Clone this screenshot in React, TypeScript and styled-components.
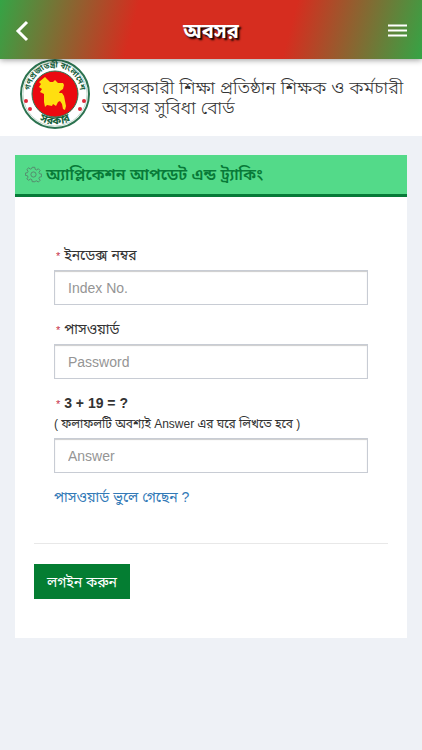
import React from "react";
import styled, { createGlobalStyle } from "styled-components";

const GlobalStyle = createGlobalStyle`
  * { box-sizing: border-box; }
  body {
    margin: 0;
    background: #eef1f6;
    color: #333;
    font-family: "Liberation Sans", "Noto Sans Bengali", "Noto Sans", sans-serif;
    font-size: 14px;
    line-height: 20px;
  }
`;

const TopBar = styled.header`
  position: relative;
  z-index: 1;
  display: flex;
  align-items: center;
  justify-content: space-between;
  height: 59px;
  padding: 3px 12px 0;
  background: linear-gradient(105deg, #35a445 0%, #d62d1f 32%, #d62d1f 68%, #35a445 100%);
  box-shadow: 0 1px 6px rgba(0, 0, 0, 0.4);
`;

const Title = styled.h1`
  margin: 0;
  color: #fff;
  font-size: 20px;
  line-height: 28px;
  font-weight: 700;
  text-shadow: 2px 2px 2px #000;
`;

const BarButton = styled.button`
  display: flex;
  padding: 0;
  border: 0;
  background: none;
  color: #fff;
`;

const Organisation = styled.section`
  display: flex;
  align-items: center;
  gap: 10px;
  min-height: 77px;
  padding: 0 18px 7px;
  background: #fff;
`;

const OrganisationName = styled.h2`
  flex: 1;
  margin: 0;
  padding-top: 8px;
  color: #333;
  font-size: 18px;
  line-height: 20px;
  font-weight: 300;
`;

const Card = styled.main`
  margin: 19px 15px 0;
  background: #fff;
`;

const CardHeader = styled.div`
  display: flex;
  align-items: center;
  gap: 4px;
  min-height: 42px;
  padding: 0 10px;
  border-bottom: 3px solid #067a38;
  background: #53da89;
`;

const CardTitle = styled.h3`
  margin: 0;
  color: #087a38;
  font-size: 16px;
  line-height: 24px;
  font-weight: 600;
`;

const Form = styled.form`
  padding: 48px 19px 39px;
`;

const Fields = styled.div`
  display: flex;
  flex-direction: column;
  gap: 14px;
  padding: 0 20px 36px;
  border-bottom: 1px solid #e8e8e8;
`;

const Field = styled.div`
  display: flex;
  flex-direction: column;
`;

const Label = styled.label<{ $strong?: boolean }>`
  padding: 0 2px ${(p) => (p.$strong ? 0 : 4)}px;
  font-weight: ${(p) => (p.$strong ? 700 : 400)};
`;

const Required = styled.span`
  color: #c8324a;
  font-size: 11px;
  font-weight: 400;
`;

const Hint = styled.span`
  padding-bottom: 4px;
  font-size: 12px;
`;

const TextInput = styled.input`
  width: 100%;
  height: 35px;
  padding: 0 13px;
  border: 1px solid #c8ccd4;
  border-radius: 0;
  background: #fff;
  box-shadow: inset 0 1px 1px rgba(0, 0, 0, 0.2);
  color: #333;
  font: inherit;
  &::placeholder { color: #959595; opacity: 1; }
`;

const ForgotLink = styled.a`
  align-self: flex-start;
  color: #337ab7;
  text-decoration: none;
`;

const SubmitButton = styled.button`
  margin-top: 20px;
  padding: 0 13px;
  height: 35px;
  border: 0;
  background: #047d32;
  color: #fff;
  font: inherit;
`;

const BackIcon = () => (
  <svg width="24" height="24" viewBox="0 0 24 24" fill="none" stroke="currentColor" strokeWidth="3">
    <path d="M15 3 6 12l9 9" />
  </svg>
);

const MenuIcon = () => (
  <svg width="24" height="24" viewBox="0 0 24 24" fill="none" stroke="currentColor" strokeWidth="2">
    <path d="M2 6.500h19M2 11.500h19M2 16.500h19" />
  </svg>
);

const GearIcon = () => (
  <svg width="17" height="17" viewBox="-1 -1 26 26" fill="none" stroke="#568a6d" strokeWidth="1.5" strokeLinejoin="round">
    <path d="M10 1h4l.6 3.2 2.1.9 2.7-1.9 2.8 2.8-1.9 2.7.9 2.1 3.2.6v4l-3.2.6-.9 2.1 1.9 2.700-2.800 2.800-2.700-1.900-2.100.900L14 23h-4l-.6-3.200-2.100-.900-2.700 1.900L1.800 18.700l1.900-2.700-.9-2.100L-.4 13.300V9.800L2.800 9.200l.9-2.100L1.800 4.400 4.600 1.800l2.700 1.900 2.100-.9z" />
    <circle cx="12" cy="12" r="4" />
  </svg>
);

const Emblem = () => (
  <svg width="74" height="70" viewBox="0 0 74 70" role="img" aria-label="গণপ্রজাতন্ত্রী বাংলাদেশ সরকার">
    <defs>
      <path id="arc-top" d="M13.500 42A25 25 0 1 1 60.500 42" />
      <path id="arc-bottom" d="M11 52A32 32 0 0 0 63 52" />
    </defs>
    <circle cx="37" cy="35" r="34" fill="#fff" stroke="#2c7350" strokeWidth="2" />
    <circle cx="37" cy="35" r="32" fill="none" stroke="#8bb49d" strokeWidth="0.500" />
    <circle cx="37" cy="35" r="23" fill="#eb0910" stroke="#2c7350" strokeWidth="1" />
    <path
      fill="#ffdf10"
      d="m27 18 3 3 2 2 3 0 2-2 3 3 5 0 1 2-1 4-3 2-1 2 3 0 2 3 1 5 1 5-1 4-2-1-1-5-2-3-2 1-2 4-3-2-1 2-5-1-2 2-1-5 0-8-4-2 2-3-3-2 2-3-2-2z"
    />
    <g fill="#17623d" fontFamily='"Noto Sans Bengali", "Noto Sans", sans-serif' fontWeight="700" textAnchor="middle">
      <text fontSize="8">
        <textPath href="#arc-top" startOffset="50%">গণপ্রজাতন্ত্রী বাংলাদেশ</textPath>
      </text>
      <text fontSize="11">
        <textPath href="#arc-bottom" startOffset="50%">সরকার</textPath>
      </text>
    </g>
    <g fill="#df2838">
      <circle cx="8" cy="42" r="2" />
      <circle cx="12" cy="50" r="2" />
      <circle cx="66" cy="42" r="2" />
      <circle cx="62" cy="50" r="2" />
    </g>
  </svg>
);

export default function App() {
  return (
    <>
      <GlobalStyle />
      <TopBar>
        <BarButton type="button" aria-label="Back">
          <BackIcon />
        </BarButton>
        <Title>অবসর</Title>
        <BarButton type="button" aria-label="Menu">
          <MenuIcon />
        </BarButton>
      </TopBar>
      <Organisation>
        <Emblem />
        <OrganisationName>বেসরকারী শিক্ষা প্রতিষ্ঠান শিক্ষক ও কর্মচারী অবসর সুবিধা বোর্ড</OrganisationName>
      </Organisation>
      <Card>
        <CardHeader>
          <GearIcon />
          <CardTitle>অ্যাপ্লিকেশন আপডেট এন্ড ট্র্যাকিং</CardTitle>
        </CardHeader>
        <Form onSubmit={(e) => e.preventDefault()}>
          <Fields>
            <Field>
              <Label htmlFor="index-no"><Required>*</Required> ইনডেক্স নম্বর</Label>
              <TextInput id="index-no" placeholder="Index No." />
            </Field>
            <Field>
              <Label htmlFor="password"><Required>*</Required> পাসওয়ার্ড</Label>
              <TextInput id="password" type="password" placeholder="Password" />
            </Field>
            <Field>
              <Label htmlFor="answer" $strong><Required>*</Required> 3 + 19 = ?</Label>
              <Hint id="answer-hint">( ফলাফলটি অবশ্যই Answer এর ঘরে লিখতে হবে )</Hint>
              <TextInput id="answer" placeholder="Answer" aria-describedby="answer-hint" />
            </Field>
            <ForgotLink href="#forgot">পাসওয়ার্ড ভুলে গেছেন ?</ForgotLink>
          </Fields>
          <SubmitButton type="submit">লগইন করুন</SubmitButton>
        </Form>
      </Card>
    </>
  );
}
